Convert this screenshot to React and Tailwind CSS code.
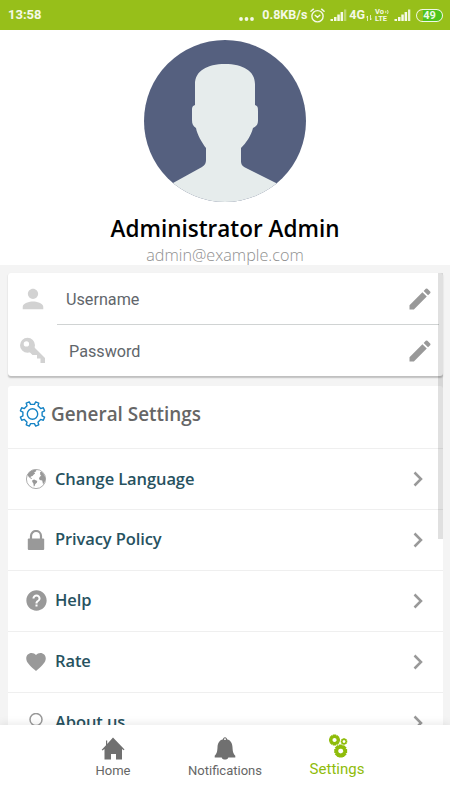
import { MdPerson, MdEdit } from 'react-icons/md';
import { IoMdHelpCircle, IoMdHeart } from 'react-icons/io';

const items = [
  { label: 'Change Language', icon: Earth, size: 'size-5' },
  { label: 'Privacy Policy', icon: Lock, size: 'size-5' },
  { label: 'Help', icon: IoMdHelpCircle, size: 'size-[25px]' },
  { label: 'Rate', icon: IoMdHeart, size: 'size-6' },
  { label: 'About us', icon: PersonOutline, size: 'size-5' },
];

// closed outline of a cog centred on 0,0
function cogPath(teeth, outer, inner, offset = 0) {
  const step = (Math.PI * 2) / teeth;
  const at = (r, a) => `${(r * Math.cos(a)).toFixed(2)} ${(r * Math.sin(a)).toFixed(2)}`;
  let d = '';
  for (let i = 0; i < teeth; i += 1) {
    const a = i * step + offset;
    d += `${i ? 'L' : 'M'}${at(inner, a - step * 0.25)}L${at(outer, a - step * 0.17)}`;
    d += `L${at(outer, a + step * 0.17)}L${at(inner, a + step * 0.25)}`;
  }
  return `${d}Z`;
}

function Earth({ className }) {
  return (
    <svg viewBox="0 0 20 20" className={className} fill="currentColor">
      <circle cx="10" cy="10" r="9.600" fill="none" stroke="currentColor" strokeWidth=".8" />
      <path d="M1.300 6C2.800 3 5 1.400 8 .8l2.500.5-.6 1.200-1.700.8.9 1.200L7.800 5.500 6.500 7l-1.600.4-.5 1 1.300.5.400 1.200-1.500-.5L2.800 8 2 6.700z" />
      <path d="M6.300 11.200l1.800-.6 3.200 1.400-.5 1.800-1.500 1.200-.7 2-.8.400-.4-2.800-1.200-1.900z" />
      <path d="M14 3.200l1.500-.5c1.900 1.400 3.300 3.600 3.800 6.200l-.3 3-1 2.400-1 .8-.8-3.600-2.500-.6-.7-1.700 1.200-1.900 1.200-.4-1.100-.9z" />
    </svg>
  );
}

function Lock({ className }) {
  return (
    <svg viewBox="0 0 20 20" className={className}>
      <path d="M5 10V6a5 5 0 0 1 10 0v4" fill="none" stroke="currentColor" strokeWidth="2.200" />
      <rect x="1.800" y="8.500" width="16.400" height="11.500" rx="1" fill="currentColor" />
    </svg>
  );
}

function Key({ className }) {
  return (
    <svg viewBox="0 0 28 28" className={className} fill="currentColor">
      <path
        fillRule="evenodd"
        d="M8.500.8a7.500 7.500 0 1 1 0 15 7.500 7.500 0 0 1 0-15zM7.400 4.200a2.700 2.700 0 1 0 0 5.400 2.700 2.700 0 0 0 0-5.400z"
      />
      <path d="M14.500 9.500L26 21v5h-4.500v-4.500H18v-3.500h-4.500L10 14.500z" />
    </svg>
  );
}

function PersonOutline({ className }) {
  return (
    <svg viewBox="0 0 20 20" className={className} fill="none" stroke="currentColor" strokeWidth="1.5">
      <circle cx="10" cy="6.5" r="6" />
      <path d="M1 20c1-5 5-6 9-6s8 1 9 6" />
    </svg>
  );
}

function Signal({ className, last = 'opacity-40' }) {
  return (
    <svg viewBox="0 0 17 12" className={className} fill="currentColor">
      <path d="M.5 10h2.500v2H.5zM4 8h2.500v4H4zM7.300 5.500h2.500V12H7.300zM10.600 3h2.500v9h-2.500z" />
      <path d="M14 .5h2.300V12H14z" className={last} />
    </svg>
  );
}

function StatusBar() {
  return (
    <header className="flex h-[30px] shrink-0 items-center bg-[#97bf1a] pl-2 pr-[7px] font-[Roboto] text-[13px] font-bold text-white/90">
      <span>13:58</span>
      <svg viewBox="0 0 15 4" className="ml-auto mt-2 h-1 w-[15px]" fill="currentColor">
        <circle cx="2" cy="2" r="1.9" />
        <circle cx="7.500" cy="2" r="1.9" />
        <circle cx="13" cy="2" r="1.9" />
      </svg>
      <span className="ml-2 text-[12.500px]">0.8KB/s</span>
      <svg viewBox="0 0 16 16" className="ml-[3px] size-[15px]" fill="none" stroke="currentColor" strokeWidth="1.500" strokeLinecap="round">
        <circle cx="8" cy="8.800" r="6" />
        <path d="M5.500 7.800L8 10l2.500-2.200M1 3.500l2.600-2.300M15 3.500l-2.600-2.300" />
      </svg>
      <Signal className="ml-[5px] h-3 w-[17px]" />
      <span className="ml-[2px] text-[12.500px]">4G</span>
      <svg viewBox="0 0 6 6" className="ml-px mt-1.5 size-[6px]" fill="none" stroke="currentColor" strokeWidth=".8">
        <path d="M1.500 6V1L.3 2.500M4.500 0v5l1.200-1.500" />
      </svg>
      <span className="ml-[3px] flex w-[14px] flex-col text-[7.500px] leading-[7px]">
        <span className="flex items-center">
          Vo
          <svg viewBox="0 0 5 6" className="ml-px h-[6px] w-1" fill="none" stroke="currentColor">
            <path d="M1 1.500v3M3 .5c1 1.500 1 3.500 0 5" />
          </svg>
        </span>
        <span>LTE</span>
      </span>
      <Signal className="ml-[5px] h-3 w-[17px]" last="opacity-90" />
      <span className="ml-[5px] flex h-[13px] w-[27px] items-center justify-center rounded-full border-[1.5px] border-white/90 bg-linear-to-r from-[#97bf1a] from-25% via-[#4fc41c] via-25% to-[#4fc41c] text-[11px] leading-none">
        49
      </span>
    </header>
  );
}

function Profile() {
  return (
    <section className="flex h-[235px] shrink-0 flex-col items-center bg-white pt-[10px]">
      <svg viewBox="0 0 162 162" className="size-[162px] shrink-0 rounded-full bg-[#55607f]" fill="#e6ecec">
        <path d="M51 65V44C51 31 63 24 81 24s30 7 30 20v21c3 1 3 3 3 6v9c0 4-1 6-5 8-2 8-7 15-12 20v13c0 3 1 5 5 7l30 15V163H29v-20L58 127c3-2 4-4 4-7v-12c-4-5-9-14-10-20-3-2-4-4-4-8v-9c0-3 0-5 3-6z" />
      </svg>
      <h1 className="mt-3 text-[22.500px] font-semibold leading-[30px] text-black">Administrator Admin</h1>
      <p className="mt-0.5 text-[16.200px] font-light leading-[19px] text-[#8f8f8f]">admin@example.com</p>
    </section>
  );
}

function Account() {
  return (
    <section className="h-[103px] shrink-0 rounded-[3px] bg-white font-[Roboto] text-[16.200px] text-[#61666b] shadow-[0_1.5px_1.5px_rgba(0,0,0,0.22)]">
      <div className="flex h-[51px] items-center pl-[11px] pr-[9px]">
        <MdPerson className="size-7 scale-110 text-[#d2d2d2]" />
        <span className="ml-[19px] mt-[3px]">Username</span>
        <MdEdit className="ml-auto size-7 text-[#999]" />
      </div>
      <div className="ml-[49px] mr-1 h-px bg-[#d0d3d3]" />
      <div className="flex h-[51px] items-center pl-[11px] pr-[9px]">
        <Key className="size-7 text-[#d2d2d2]" />
        <span className="ml-[22px] mt-[3px]">Password</span>
        <MdEdit className="ml-auto size-7 text-[#999]" />
      </div>
    </section>
  );
}

function General() {
  return (
    <section className="mt-[10px] shrink-0 rounded-t-[3px] bg-white">
      <div className="flex h-[62px] items-center pb-1.5 pl-[11px]">
        <svg viewBox="-14 -14 28 28" className="size-7 -translate-x-[0.5px]" fill="none" stroke="#1583c5" strokeWidth="1.400" strokeLinejoin="round">
          <path d={cogPath(8, 12.500, 9.800, Math.PI / 8)} />
          <circle r="5.200" />
        </svg>
        <h2 className="ml-1 mt-px text-[18.900px] font-semibold text-[#666]">General Settings</h2>
      </div>
      {items.map(({ label, icon: Icon, size }) => (
        <div key={label} className="flex h-[60.9px] items-center border-t border-[#efefef] pl-4 pr-5">
          <span className="flex w-6 justify-center text-[#999]">
            <Icon className={`${size} shrink-0`} />
          </span>
          <span className="ml-[7px] text-[16.500px] font-semibold tracking-[-0.1px] text-[#27525f]">{label}</span>
          <svg viewBox="0 0 10 16" className="ml-auto h-4 w-[10px]" fill="none" stroke="#999" strokeWidth="2.500">
            <path d="M1.500 1.500L8 8l-6.500 6.500" />
          </svg>
        </div>
      ))}
    </section>
  );
}

function TabBar() {
  return (
    <nav className="relative flex h-[75px] shrink-0 justify-center bg-white font-[Roboto] text-[13px] text-[#666] shadow-[0_-2px_8px_rgba(0,0,0,0.08)]">
      <div className="flex w-28 flex-col items-center pt-3">
        <svg viewBox="0 0 24 24" className="size-6" fill="#707070">
          <path d="M12 .5L23.500 12.500l-.8.8L21 12v10.500h-6V17H10v5.500H3.500V12l-2 1.500-.8-.8L5 8.200V3.500h1.200v3.400z" />
        </svg>
        <span>Home</span>
      </div>
      <div className="flex w-28 flex-col items-center pt-3">
        <svg viewBox="0 0 24 24" className="size-6" fill="#707070">
          <path
            fillRule="evenodd"
            d="M12 .3c1.300 0 2 1 2 2 3.800 1 5.300 4 5.500 8 .2 4.500.8 6.500 2.800 8.500v1.700h-7c-.5 2.800-6.100 2.800-6.600 0h-7v-1.700c2-2 2.600-4 2.800-8.500.2-4 1.700-7 5.500-8 0-1 .7-2 2-2zm0 1a.9.900 0 1 0 0 1.800.9.900 0 0 0 0-1.800z"
          />
        </svg>
        <span>Notifications</span>
      </div>
      <div className="flex w-28 flex-col items-center pt-[9px] text-[#8fbc0a]">
        <svg viewBox="0 0 20 24" className="ml-1 h-6 w-5" fill="none" stroke="currentColor">
          <path transform="translate(5.500 6)" strokeWidth="2.400" d={cogPath(8, 4.3, 3.2)} />
          <path transform="translate(11.700 17)" strokeWidth="2.800" d={cogPath(8, 5.1, 3.8)} />
          <path transform="translate(15 7.500)" strokeWidth="1.200" d={cogPath(8, 2.7, 2)} />
        </svg>
        <span className="text-[15px]">Settings</span>
      </div>
    </nav>
  );
}

export default function App() {
  return (
    <div className="flex h-[800px] w-[450px] flex-col overflow-hidden bg-[#f4f4f4] font-['Open_Sans',sans-serif]">
      <StatusBar />
      <Profile />
      <main className="relative flex min-h-0 flex-1 flex-col overflow-hidden pl-2 pr-[7px] pt-2">
        <Account />
        <General />
        <div className="absolute right-[7px] top-2 h-[266px] w-[5px] bg-black/12" />
      </main>
      <TabBar />
    </div>
  );
}
